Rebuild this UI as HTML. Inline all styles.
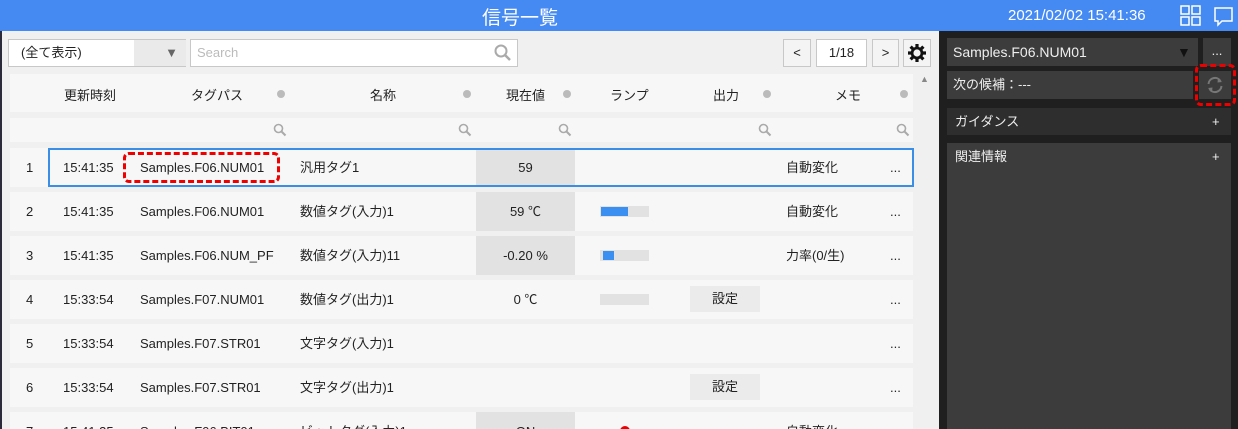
<!DOCTYPE html>
<html><head><meta charset="utf-8"><style>
*{box-sizing:border-box;margin:0;padding:0}
html{width:1238px;height:429px;overflow:hidden}
body{width:1238px;height:429px;overflow:hidden;background:#f0f0f0;font-family:"Liberation Sans","Noto Sans CJK JP",sans-serif;font-size:13px;color:#222;position:relative}
.a{position:absolute}
.hdr{left:0;top:0;width:1238px;height:31px;background:#4589f3;color:#fff}
.row{left:10px;width:903px;height:39px;background:#f7f7f7;overflow:hidden}
.c{position:absolute;top:0;line-height:39px;white-space:nowrap}
.val{position:absolute;left:466px;width:99px;top:0;height:39px;background:#e2e2e2;text-align:center;line-height:39px}
.bar{position:absolute;left:590px;top:14px;width:49px;height:11px;background:#e2e2e2}
.btn{position:absolute;left:680px;top:6px;width:70px;height:26px;background:#ebebeb;text-align:center;line-height:26px}
.dark{background:#3c3c3c;color:#eee}
</style></head><body>
<div class="a" style="left:0;top:31px;width:2px;height:398px;background:#2a2a3a"></div>
<div class="a hdr"><div class="a" style="left:0;width:1040px;text-align:center;top:3px;font-size:19px">信号一覧</div>
<div class="a" style="left:1008px;top:7px;font-size:15px">2021/02/02 15:41:36</div>
<svg class="a" style="left:1180px;top:5px" width="22" height="22"><g fill="none" stroke="#fff" stroke-width="1.5"><rect x="1" y="1" width="8" height="8"/><rect x="12" y="1" width="8" height="8"/><rect x="1" y="12" width="8" height="8"/><rect x="12" y="12" width="8" height="8"/></g></svg>
<svg class="a" style="left:1213px;top:6px" width="22" height="22"><path d="M2 2H19V15H9L5 19V15H2Z" fill="none" stroke="#fff" stroke-width="1.5"/></svg></div>
<div class="a" style="left:8px;top:39px;width:178px;height:28px;border:1px solid #c8c8c8;background:#fff"><span class="a" style="left:12px;top:0;line-height:26px">(全て表示)</span><div class="a" style="left:125px;top:0;width:52px;height:26px;background:#eaeaea;text-align:right;padding-right:8px;line-height:26px;color:#666">▼</div></div>
<div class="a" style="left:190px;top:39px;width:328px;height:28px;border:1px solid #c8c8c8;background:#fff"><span class="a" style="left:6px;top:0;line-height:26px;color:#bbb">Search</span>
<svg class="a" style="left:302px;top:3px" width="20" height="20"><circle cx="8" cy="8" r="5.5" fill="none" stroke="#aaa" stroke-width="2"/><path d="M12 12L17 17" stroke="#aaa" stroke-width="2.5"/></svg></div>
<div class="a" style="left:783px;top:39px;width:28px;height:28px;border:1px solid #c8c8c8;background:#f4f4f4;text-align:center;line-height:26px">&lt;</div>
<div class="a" style="left:816px;top:39px;width:51px;height:28px;border:1px solid #c8c8c8;background:#fff;text-align:center;line-height:26px">1/18</div>
<div class="a" style="left:872px;top:39px;width:27px;height:28px;border:1px solid #c8c8c8;background:#f4f4f4;text-align:center;line-height:26px">&gt;</div>
<div class="a" style="left:903px;top:39px;width:28px;height:28px;border:1px solid #c8c8c8;background:#f4f4f4"><svg class="a" style="left:3px;top:3px" width="20" height="20" viewBox="0 0 20 20"><g stroke="#111" stroke-width="3.2"><path d="M10 1V19M1 10H19M3.6 3.6L16.4 16.4M16.4 3.6L3.6 16.4"/></g><circle cx="10" cy="10" r="6.3" fill="#111"/><circle cx="10" cy="10" r="3.6" fill="#f4f4f4"/></svg></div>
<div class="a" style="left:10px;top:74px;width:903px;height:38px;background:#f7f7f7"></div>
<div class="a" style="left:10px;top:118px;width:903px;height:24px;background:#f7f7f7"></div>
<div class="a" style="left:920px;top:74px;font-size:9px;color:#888">▲</div>
<div class="a" style="top:85px;left:64px">更新時刻</div><div class="a" style="top:85px;left:191px">タグパス</div><div class="a" style="top:85px;left:370px">名称</div><div class="a" style="top:85px;left:506px">現在値</div><div class="a" style="top:85px;left:610px">ランプ</div><div class="a" style="top:85px;left:713px">出力</div><div class="a" style="top:85px;left:835px">メモ</div>
<div class="a" style="top:90px;left:277px;width:8px;height:8px;border-radius:50%;background:#bbb"></div>
<div class="a" style="top:90px;left:463px;width:8px;height:8px;border-radius:50%;background:#bbb"></div>
<div class="a" style="top:90px;left:563px;width:8px;height:8px;border-radius:50%;background:#bbb"></div>
<div class="a" style="top:90px;left:763px;width:8px;height:8px;border-radius:50%;background:#bbb"></div>
<div class="a" style="top:90px;left:900px;width:8px;height:8px;border-radius:50%;background:#bbb"></div>
<svg class="a" style="left:273px;top:123px" width="14" height="14"><circle cx="5.5" cy="5.5" r="4" fill="none" stroke="#aaa" stroke-width="1.6"/><path d="M8.5 8.5L12.5 12.5" stroke="#aaa" stroke-width="2"/></svg>
<svg class="a" style="left:458px;top:123px" width="14" height="14"><circle cx="5.5" cy="5.5" r="4" fill="none" stroke="#aaa" stroke-width="1.6"/><path d="M8.5 8.5L12.5 12.5" stroke="#aaa" stroke-width="2"/></svg>
<svg class="a" style="left:558px;top:123px" width="14" height="14"><circle cx="5.5" cy="5.5" r="4" fill="none" stroke="#aaa" stroke-width="1.6"/><path d="M8.5 8.5L12.5 12.5" stroke="#aaa" stroke-width="2"/></svg>
<svg class="a" style="left:758px;top:123px" width="14" height="14"><circle cx="5.5" cy="5.5" r="4" fill="none" stroke="#aaa" stroke-width="1.6"/><path d="M8.5 8.5L12.5 12.5" stroke="#aaa" stroke-width="2"/></svg>
<svg class="a" style="left:896px;top:123px" width="14" height="14"><circle cx="5.5" cy="5.5" r="4" fill="none" stroke="#aaa" stroke-width="1.6"/><path d="M8.5 8.5L12.5 12.5" stroke="#aaa" stroke-width="2"/></svg>
<div class="a row" style="top:148px"><div class="val">59</div><div class="c" style="left:16px">1</div><div class="c" style="left:53px">15:41:35</div><div class="c" style="left:130px">Samples.F06.NUM01</div><div class="c" style="left:290px">汎用タグ1</div><div class="c" style="left:776px">自動変化</div><div class="c" style="left:880px">...</div></div>
<div class="a" style="left:48px;top:148px;width:866px;height:39px;border:2px solid #3a8ee6"></div>
<div class="a" style="left:123px;top:152px;width:157px;height:31px;border:3px dashed #e00;border-radius:6px"></div>
<div class="a row" style="top:192px"><div class="val">59 ℃</div><div class="bar"><div style="width:27px;height:9px;margin:1px;background:#3a8ff0"></div></div><div class="c" style="left:16px">2</div><div class="c" style="left:53px">15:41:35</div><div class="c" style="left:130px">Samples.F06.NUM01</div><div class="c" style="left:290px">数値タグ(入力)1</div><div class="c" style="left:776px">自動変化</div><div class="c" style="left:880px">...</div></div>
<div class="a row" style="top:236px"><div class="val">-0.20 %</div><div class="bar"><div style="width:11px;height:9px;margin:1px 0 0 3px;background:#3a8ff0"></div></div><div class="c" style="left:16px">3</div><div class="c" style="left:53px">15:41:35</div><div class="c" style="left:130px">Samples.F06.NUM_PF</div><div class="c" style="left:290px">数値タグ(入力)11</div><div class="c" style="left:776px">力率(0/生)</div><div class="c" style="left:880px">...</div></div>
<div class="a row" style="top:280px"><div class="c" style="left:466px;width:99px;text-align:center">0 ℃</div><div class="bar"></div><div class="btn">設定</div><div class="c" style="left:16px">4</div><div class="c" style="left:53px">15:33:54</div><div class="c" style="left:130px">Samples.F07.NUM01</div><div class="c" style="left:290px">数値タグ(出力)1</div><div class="c" style="left:880px">...</div></div>
<div class="a row" style="top:324px"><div class="c" style="left:16px">5</div><div class="c" style="left:53px">15:33:54</div><div class="c" style="left:130px">Samples.F07.STR01</div><div class="c" style="left:290px">文字タグ(入力)1</div><div class="c" style="left:880px">...</div></div>
<div class="a row" style="top:368px"><div class="btn">設定</div><div class="c" style="left:16px">6</div><div class="c" style="left:53px">15:33:54</div><div class="c" style="left:130px">Samples.F07.STR01</div><div class="c" style="left:290px">文字タグ(出力)1</div><div class="c" style="left:880px">...</div></div>
<div class="a row" style="top:412px;height:17px"><div class="val">ON</div><div style="position:absolute;left:610px;top:14px;width:10px;height:10px;border-radius:50%;background:#e00"></div><div class="c" style="left:16px">7</div><div class="c" style="left:53px">15:41:35</div><div class="c" style="left:130px">Samples.F06.BIT01</div><div class="c" style="left:290px">ビットタグ(入力)1</div><div class="c" style="left:776px">自動変化</div></div>
<div class="a" style="left:939px;top:31px;width:299px;height:398px;background:#1f1f1f"></div>
<div class="a dark" style="left:947px;top:38px;width:251px;height:28px;font-size:14px;line-height:28px;padding-left:6px">Samples.F06.NUM01<span class="a" style="left:230px;color:#111">▼</span></div>
<div class="a dark" style="left:1203px;top:38px;width:28px;height:28px;text-align:center;line-height:26px">...</div>
<div class="a dark" style="left:947px;top:71px;width:246px;height:28px;line-height:28px;padding-left:6px">次の候補：---</div>
<div class="a dark" style="left:1199px;top:71px;width:32px;height:28px"><svg class="a" style="left:6px;top:4px" width="20" height="20" viewBox="0 0 20 20"><g fill="none" stroke="#777" stroke-width="2"><path d="M3.5 9A6.5 6.5 0 0 1 15.5 6"/><path d="M16.5 11A6.5 6.5 0 0 1 4.5 14"/></g><path d="M13 3L17 7L12.5 7.5Z M7 17L3 13L7.5 12.5Z" fill="#777"/></svg></div>
<div class="a" style="left:1195px;top:64px;width:41px;height:42px;border:3px dashed #e00;border-radius:6px"></div>
<div class="a" style="left:947px;top:108px;width:284px;height:27px;background:#2e2e2e;color:#eee;line-height:27px;padding-left:8px">ガイダンス<span class="a" style="left:265px">+</span></div>
<div class="a dark" style="left:947px;top:143px;width:284px;height:286px;padding:4px 8px;line-height:20px">関連情報<span class="a" style="left:265px;top:4px">+</span></div>
</body></html>
